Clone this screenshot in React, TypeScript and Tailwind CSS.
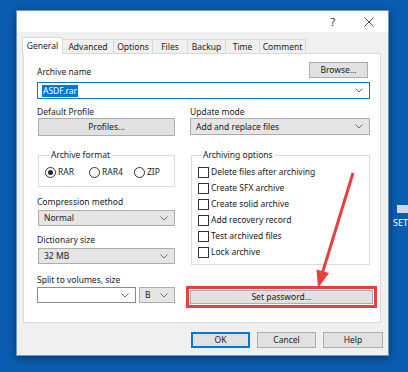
import React from "react";

const tabs = [
  { name: "General", w: "w-[41px]" },
  { name: "Advanced", w: "w-[52px]" },
  { name: "Options", w: "w-[40px]" },
  { name: "Files", w: "w-[36px]" },
  { name: "Backup", w: "w-[39px]" },
  { name: "Time", w: "w-[35px]" },
  { name: "Comment", w: "w-[47px]" },
];

const options = [
  "Delete files after archiving",
  "Create SFX archive",
  "Create solid archive",
  "Add recovery record",
  "Test archived files",
  "Lock archive",
];

const Chevron = () => (
  <svg width="8" height="5" viewBox="0 0 8 5" className="shrink-0">
    <path d="M0.5 0.5 L4 4 L7.5 0.5" fill="none" stroke="#6d6d6d" strokeWidth="1" />
  </svg>
);

const Combo = ({
  text,
  className,
  white,
}: {
  text?: string;
  className: string;
  white?: boolean;
}) => (
  <div
    className={`flex items-center justify-between pl-[5px] pr-[6px] border ${
      white ? "bg-white border-[#8a8a8a]" : "bg-[#e5e5e5] border-[#adadad]"
    } ${className}`}
  >
    <span>{text}</span>
    <Chevron />
  </div>
);

const Radio = ({ label, checked, w }: { label: string; checked?: boolean; w: string }) => (
  <div className={`flex items-center gap-[2px] ${w}`}>
    <div className="w-[11px] h-[11px] rounded-full border border-[#333] bg-white flex items-center justify-center">
      {checked && <div className="w-[5px] h-[5px] rounded-full bg-[#222]" />}
    </div>
    <span>{label}</span>
  </div>
);

const Button = ({ label, className }: { label: string; className: string }) => (
  <div
    className={`flex items-center justify-center bg-[#e1e1e1] border border-[#adadad] ${className}`}
  >
    {label}
  </div>
);

export default function App() {
  return (
    <div className="relative w-[408px] h-[372px] overflow-hidden bg-[#0b5db1] font-['Noto_Sans',sans-serif] text-[8.5px] leading-[12px] text-[#1a1a1a]">
      <div className="pl-[16px] pt-[10px]">
        <div className="w-[373px] h-[346px] flex flex-col bg-[#f0f0f0] border border-[#6f96c4] shadow-[0_2px_8px_rgba(0,0,0,0.45)]">
          {/* Title bar */}
          <div className="h-[21px] bg-white flex justify-end pr-[1px]">
            <div className="w-[36px] flex items-center justify-center text-[11px] text-[#333]">?</div>
            <div className="w-[36px] flex items-center justify-center">
              <svg width="10" height="10" viewBox="0 0 10 10">
                <path d="M0.5 0.5 L9.5 9.5 M9.5 0.5 L0.5 9.5" stroke="#333" strokeWidth="0.9" />
              </svg>
            </div>
          </div>

          <div className="flex-1 pl-[6px] pr-[7px] pt-[5px]">
            {/* Tabs */}
            <div className="h-[16px] flex items-end -ml-[1px]">
              {tabs.map((t, i) =>
                i === 0 ? (
                  <div
                    key={t.name}
                    className={`relative z-10 h-[17px] -mb-[1px] bg-white border border-b-0 border-[#d9d9d9] flex items-center justify-center ${t.w}`}
                  >
                    {t.name}
                  </div>
                ) : (
                  <div
                    key={t.name}
                    className={`h-[14px] -ml-[1px] bg-[#f0f0f0] border border-b-0 border-[#d9d9d9] flex items-center justify-center ${t.w}`}
                  >
                    {t.name}
                  </div>
                )
              )}
            </div>

            {/* Panel */}
            <div className="h-[270px] bg-white border border-[#d9d9d9] pl-[13px] pr-[10px] pt-[8px]">
              <div className="h-[16px] flex items-end justify-between">
                <span>Archive name</span>
                <Button label="Browse..." className="w-[59px] h-[16px] mr-[2px]" />
              </div>
              <div className="mt-[4px] h-[17px] flex items-center justify-between pl-[4px] pr-[6px] border border-[#0078d7] bg-white">
                <span className="bg-[#0078d7] text-white px-[1px]">ASDF.rar</span>
                <Chevron />
              </div>

              <div className="mt-[7px] flex gap-[15px]">
                {/* Left column */}
                <div className="w-[138px] flex flex-col">
                  <span className="h-[12px]">Default Profile</span>
                  <Button label="Profiles..." className="ml-[1px] h-[18px]" />
                  <fieldset className="mt-[13px] ml-[1px] border border-[#dcdcdc] pl-[6px] pb-[8px]">
                    <legend className="ml-[5px] px-[1px]">Archive format</legend>
                    <div className="mt-[5px] flex items-center">
                      <Radio label="RAR" checked w="w-[44px]" />
                      <Radio label="RAR4" w="w-[45px]" />
                      <Radio label="ZIP" w="w-[30px]" />
                    </div>
                  </fieldset>
                  <span className="mt-[9px]">Compression method</span>
                  <Combo text="Normal" className="mt-[2px] ml-[1px] h-[16px]" />
                  <span className="mt-[8px]">Dictionary size</span>
                  <Combo text="32 MB" className="mt-[2px] ml-[1px] h-[16px]" />
                  <span className="mt-[10px]">Split to volumes, size</span>
                  <div className="mt-[1px] flex gap-[3px]">
                    <Combo white className="w-[99px] h-[16px]" />
                    <Combo text="B" className="w-[36px] h-[16px]" />
                  </div>
                </div>

                {/* Right column */}
                <div className="w-[180px] flex flex-col">
                  <span className="h-[12px]">Update mode</span>
                  <Combo text="Add and replace files" className="h-[17px]" />
                  <fieldset className="mt-[14px] ml-[1px] border border-[#dcdcdc] pl-[6px] pt-[3px] pb-[4px]">
                    <legend className="ml-[4px] px-[1px]">Archiving options</legend>
                    {options.map((o) => (
                      <div key={o} className="h-[16px] flex items-center gap-[2px]">
                        <div className="w-[11px] h-[11px] border border-[#333] bg-white" />
                        <span>{o}</span>
                      </div>
                    ))}
                  </fieldset>
                  <div className="mt-[21px] -ml-[4px] -mr-[7px] border-[3px] border-[#e8413c] p-[1px]">
                    <Button label="Set password..." className="h-[14px]" />
                  </div>
                </div>
              </div>
            </div>

            {/* Bottom buttons */}
            <div className="mt-[9px] -mr-[2px] flex justify-end gap-[7px]">
              <div className="w-[59px] h-[16px] flex items-center justify-center bg-[#e1e1e1] border-2 border-[#0078d7]">
                OK
              </div>
              <Button label="Cancel" className="w-[59px] h-[16px]" />
              <Button label="Help" className="w-[60px] h-[16px]" />
            </div>
          </div>
        </div>
      </div>

      {/* Desktop icon behind the dialog */}
      <div className="absolute left-[397px] top-[205px] w-[14px] h-[8px] bg-[#cfd8e3]" />
      <div className="absolute left-[393px] top-[217px] text-white text-[9px]">SET</div>

      {/* Annotation arrow */}
      <svg className="absolute left-0 top-0" width="408" height="372" viewBox="0 0 408 372">
        <line x1="353" y1="173" x2="322.7" y2="272" stroke="#e8413c" strokeWidth="3" />
        <polygon points="318,288 329,273 316.5,269.5" fill="#e8413c" />
      </svg>
    </div>
  );
}
